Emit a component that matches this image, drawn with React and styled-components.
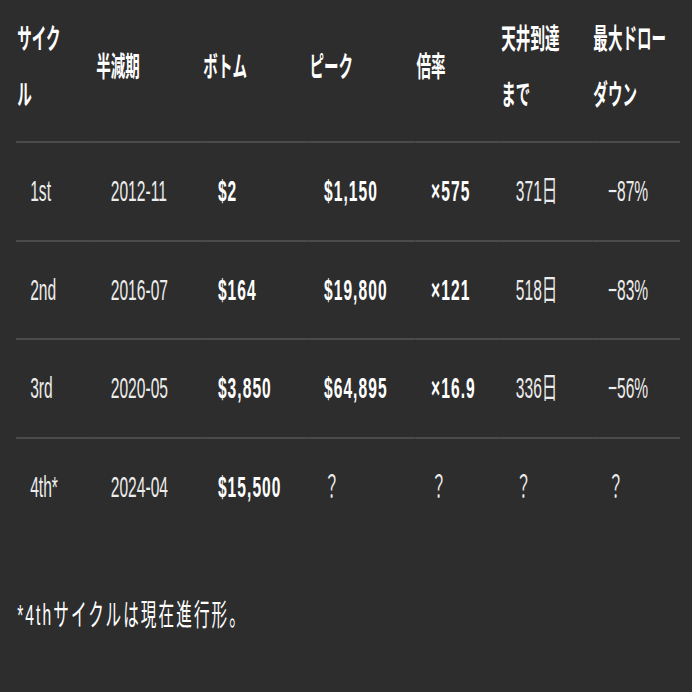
import React from 'react';
import styled, { createGlobalStyle } from 'styled-components';

// the reference is rendered horizontally squeezed, so the page is laid out wide and squeezed once
const SQUEEZE = 0.52;

const GlobalStyle = createGlobalStyle`
  html, body {
    margin: 0;
    padding: 0;
    background: #2d2d2d;
    overflow: hidden;
  }
`;

const Page = styled.div`
  width: ${692 / SQUEEZE}px;
  height: 692px;
  box-sizing: border-box;
  padding: 0 23px 0 31px;
  transform: scaleX(${SQUEEZE});
  transform-origin: left top;
  font-family: "Liberation Sans", "Noto Sans CJK JP", sans-serif;
  color: #ececec;
`;

const Table = styled.table`
  width: 100%;
  table-layout: fixed;
  border-collapse: collapse;
`;

const HeadCell = styled.th`
  box-sizing: border-box;
  width: ${(p) => p.$w}px;
  padding: 12px 0 17px 2px;
  text-align: left;
  vertical-align: middle;
  font-size: 28px;
  line-height: 56px;
  font-weight: 700;
  color: #ffffff;
  border-bottom: 2px solid #4b4b4b;
`;

const Row = styled.tr`
  &:last-child td {
    border-bottom: none;
  }
`;

const Cell = styled.td`
  padding: 20px 0 20.5px 30px;
  font-size: 30px;
  line-height: 56px;
  font-weight: ${(p) => (p.$bold ? 700 : 400)};
  letter-spacing: ${(p) => (p.$bold ? '2px' : '0')};
  color: ${(p) => (p.$bold ? '#ffffff' : '#ececec')};
  white-space: nowrap;
  border-bottom: 2px solid #4b4b4b;

  &:first-child {
    padding-left: 27px;
  }
`;

const Footnote = styled.p`
  margin: 57px 0 0 2px;
  font-size: 30px;
  line-height: 46px;
  letter-spacing: 4px;
  color: #ffffff;
`;

const columns = [
  { label: ['サイク', 'ル'], w: 152 },
  { label: ['半減期'], w: 206 },
  { label: ['ボトム'], w: 204, bold: true },
  { label: ['ピーク'], w: 206, bold: true },
  { label: ['倍率'], w: 163, bold: true },
  { label: ['天井到達', 'まで'], w: 177 },
  { label: ['最大ドロー', 'ダウン'], w: 169 },
];

const rows = [
  ['1st', '2012-11', '$2', '$1,150', '×575', '371日', '−87%'],
  ['2nd', '2016-07', '$164', '$19,800', '×121', '518日', '−83%'],
  ['3rd', '2020-05', '$3,850', '$64,895', '×16.9', '336日', '−56%'],
  ['4th*', '2024-04', '$15,500', '？', '？', '？', '？'],
];

export default function App() {
  return (
    <>
      <GlobalStyle />
      <Page>
        <Table>
          <thead>
            <tr>
              {columns.map((c) => (
                <HeadCell key={c.label.join('')} $w={c.w}>
                  {c.label.map((line, i) => (
                    <React.Fragment key={line}>
                      {i > 0 && <br />}
                      {line}
                    </React.Fragment>
                  ))}
                </HeadCell>
              ))}
            </tr>
          </thead>
          <tbody>
            {rows.map((r) => (
              <Row key={r[0]}>
                {r.map((v, i) => (
                  <Cell key={i} $bold={columns[i].bold && v !== '？'}>
                    {v}
                  </Cell>
                ))}
              </Row>
            ))}
          </tbody>
        </Table>
        <Footnote>*4thサイクルは現在進行形。</Footnote>
      </Page>
    </>
  );
}
